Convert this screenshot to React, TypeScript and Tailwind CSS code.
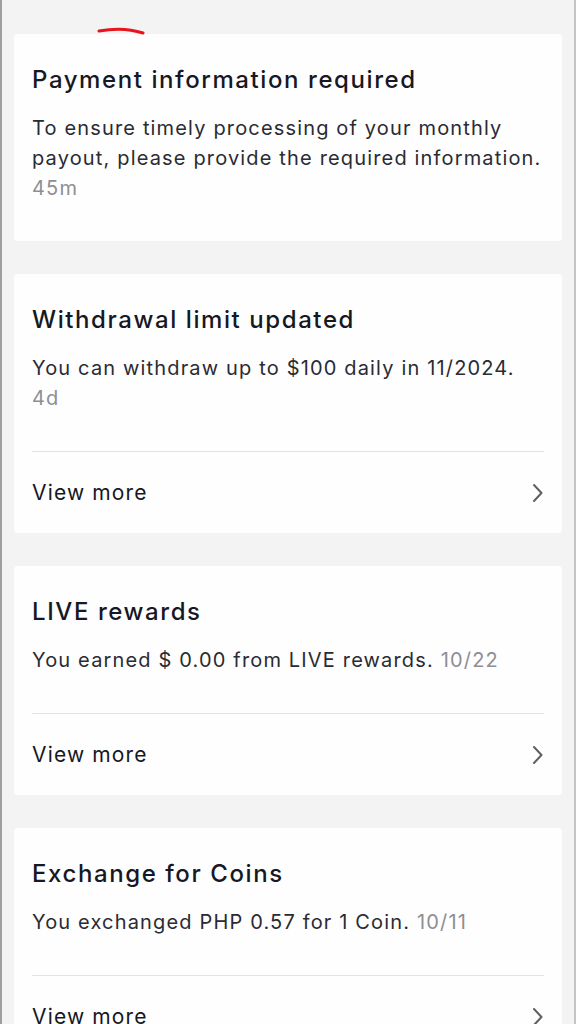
import React from "react";

interface Notice {
  title: string;
  body: React.ReactNode;
  time?: string;
  more?: boolean;
}

const notices: Notice[] = [
  {
    title: "Payment information required",
    body: "To ensure timely processing of your monthly payout, please provide the required information.",
    time: "45m",
  },
  {
    title: "Withdrawal limit updated",
    body: "You can withdraw up to $100 daily in 11/2024.",
    time: "4d",
    more: true,
  },
  {
    title: "LIVE rewards",
    body: (
      <>
        You earned $ 0.00 from LIVE rewards.{" "}
        <span className="text-[#8e8e93]">10/22</span>
      </>
    ),
    more: true,
  },
  {
    title: "Exchange for Coins",
    body: (
      <>
        You exchanged PHP 0.57 for 1 Coin.{" "}
        <span className="text-[#8e8e93]">10/11</span>
      </>
    ),
    more: true,
  },
];

const Chevron = () => (
  <svg width="14" height="22" viewBox="0 0 14 22" fill="none">
    <path
      d="M4 3l7.5 8-7.5 8"
      stroke="#5f5f64"
      strokeWidth="2"
      strokeLinecap="round"
      strokeLinejoin="round"
    />
  </svg>
);

const NoticeCard: React.FC<{ notice: Notice }> = ({ notice }) => (
  <div
    className={`bg-[#fefefe] rounded-[4px] px-[18px] pt-[31px] ${
      notice.more ? "" : "pb-[38px]"
    }`}
  >
    <h3 className="text-[24px] leading-[30px] font-medium tracking-[0.066em] text-[#161823]">
      {notice.title}
    </h3>
    <p className="mt-[18px] text-[20px] leading-[30px] tracking-[0.058em] text-[#2a2b33]">
      {notice.body}
    </p>
    {notice.time && (
      <p className="text-[20px] leading-[30px] tracking-[0.058em] text-[#8e8e93]">
        {notice.time}
      </p>
    )}
    {notice.more && (
      <>
        <div className="mt-[38px] h-px bg-[#e3e3e6]" />
        <div className="flex items-center justify-between h-[81px] text-[21px] tracking-[0.055em] text-[#161823]">
          <span>View more</span>
          <Chevron />
        </div>
      </>
    )}
  </div>
);

export default function App() {
  return (
    <div
      className="relative min-h-[1024px] bg-[#f3f3f4] border-l-2 border-r-2 border-l-[#9e9e9e] border-r-[#c4c4c4] px-[12px] pt-[34px] pb-10"
      style={{ fontFamily: "Inter, 'Liberation Sans', sans-serif" }}
    >
      <svg
        className="absolute left-[95px] top-[27px]"
        width="50"
        height="10"
        viewBox="0 0 50 10"
      >
        <path
          d="M2 4 C 18 1, 34 2, 46 6"
          stroke="#e8141b"
          strokeWidth="3"
          fill="none"
          strokeLinecap="round"
        />
      </svg>
      <div className="flex flex-col gap-[33px]">
        {notices.map((n, i) => (
          <NoticeCard key={i} notice={n} />
        ))}
      </div>
    </div>
  );
}
